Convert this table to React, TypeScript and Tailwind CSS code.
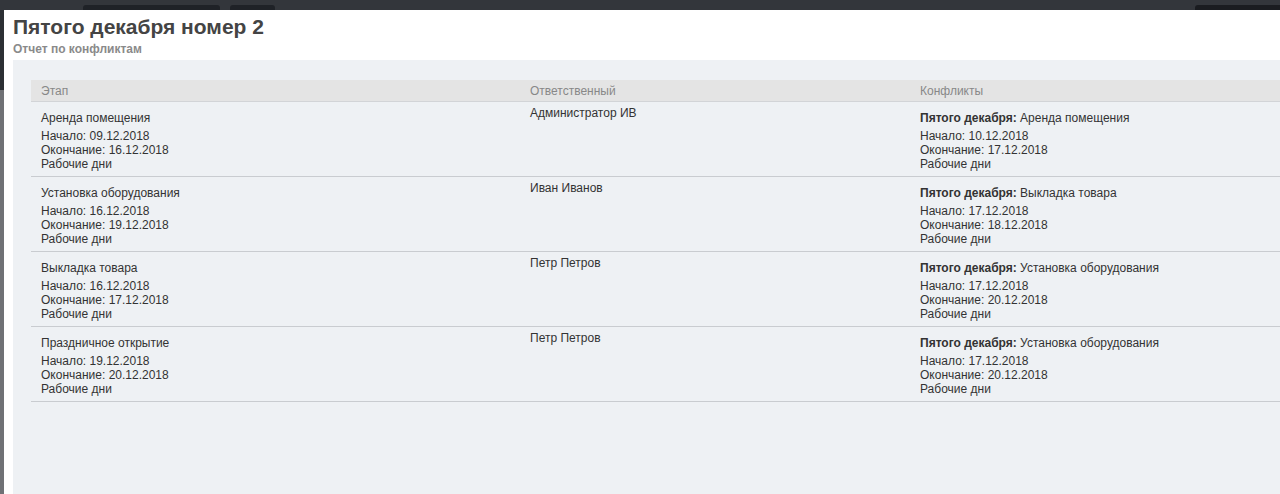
import React from "react";

type Row = {
  stage: string;
  start: string;
  end: string;
  owner: string;
  cStage: string;
  cStart: string;
  cEnd: string;
};

const rows: Row[] = [
  { stage: "Аренда помещения", start: "09.12.2018", end: "16.12.2018", owner: "Администратор ИВ", cStage: "Аренда помещения", cStart: "10.12.2018", cEnd: "17.12.2018" },
  { stage: "Установка оборудования", start: "16.12.2018", end: "19.12.2018", owner: "Иван Иванов", cStage: "Выкладка товара", cStart: "17.12.2018", cEnd: "18.12.2018" },
  { stage: "Выкладка товара", start: "16.12.2018", end: "17.12.2018", owner: "Петр Петров", cStage: "Установка оборудования", cStart: "17.12.2018", cEnd: "20.12.2018" },
  { stage: "Праздничное открытие", start: "19.12.2018", end: "20.12.2018", owner: "Петр Петров", cStage: "Установка оборудования", cStart: "17.12.2018", cEnd: "20.12.2018" },
];

export default function App() {
  return (
    <div
      className="w-[1280px] h-[494px] overflow-hidden bg-[#33363b] flex flex-col text-[#333]"
      style={{ fontFamily: '"Liberation Sans", Arial, sans-serif' }}
    >
      <div className="h-[10px] shrink-0 flex items-end">
        <div className="ml-[83px] w-[137px] h-[5px] bg-[#1f2227] rounded-t-[3px]" />
        <div className="ml-[10px] w-[45px] h-[5px] bg-[#1f2227] rounded-t-[3px]" />
        <div className="ml-auto w-[85px] h-[5px] bg-[#1a1c20] rounded-tl-[3px]" />
      </div>
      <div className="flex-1 flex min-h-0">
        <div className="w-[4px] shrink-0 flex flex-col">
          <div className="h-[80px] bg-[#2c2f34]" />
          <div className="flex-1 bg-[#6f7175]" />
        </div>
        <div className="flex-1 bg-white flex flex-col pl-[9px] min-w-0">
          <div className="pt-[5px] text-[21px] leading-[24px] font-bold text-[#444]">Пятого декабря номер 2</div>
          <div className="mt-[3px] text-[12px] leading-[14px] font-bold text-[#8a8a8a]">Отчет по конфликтам</div>
          <div className="mt-[4px] flex-1 bg-[#eef1f4] pl-[18px] pt-[20px] overflow-hidden">
            <div className="w-[1300px] text-[12px]">
              <div className="grid grid-cols-[489px_390px_1fr] bg-[#e4e4e4] border-b border-[#d2d4d7] h-[22px] items-center text-[#888]">
                <div className="pl-[10px]">Этап</div>
                <div className="pl-[10px]">Ответственный</div>
                <div className="pl-[10px]">Конфликты</div>
              </div>
              {rows.map((r, i) => (
                <div key={i} className="grid grid-cols-[489px_390px_1fr] border-b border-[#c9ccd0] leading-[14px]">
                  <div className="pl-[10px] pt-[9px] pb-[5px]">
                    <div>{r.stage}</div>
                    <div className="mt-[4px]">Начало: {r.start}</div>
                    <div>Окончание: {r.end}</div>
                    <div>Рабочие дни</div>
                  </div>
                  <div className="pl-[10px] pt-[4px]">{r.owner}</div>
                  <div className="pl-[10px] pt-[9px] pb-[5px]">
                    <div>
                      <span className="font-bold">Пятого декабря:</span> {r.cStage}
                    </div>
                    <div className="mt-[4px]">Начало: {r.cStart}</div>
                    <div>Окончание: {r.cEnd}</div>
                    <div>Рабочие дни</div>
                  </div>
                </div>
              ))}
            </div>
          </div>
        </div>
      </div>
    </div>
  );
}
